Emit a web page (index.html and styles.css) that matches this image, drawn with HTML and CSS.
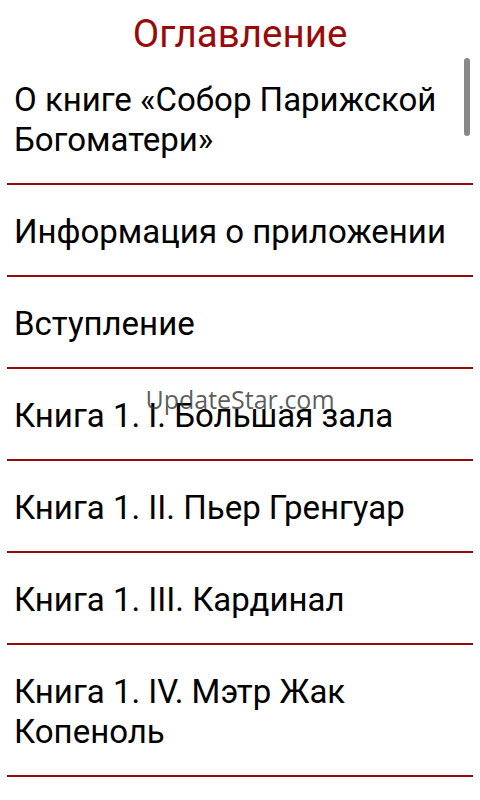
FILE: index.html
```html
<!DOCTYPE html>
<html lang="ru">
<head>
<meta charset="utf-8">
<link rel="stylesheet" href="styles.css">
</head>
<body>
<div class="screen">
  <h1 class="title">Оглавление</h1>
  <ul class="toc">
    <li class="item">О книге «Собор Парижской Богоматери»</li>
    <li class="item">Информация о приложении</li>
    <li class="item">Вступление</li>
    <li class="item">Книга 1. I. Большая зала</li>
    <li class="item">Книга 1. II. Пьер Гренгуар</li>
    <li class="item">Книга 1. III. Кардинал</li>
    <li class="item">Книга 1. IV. Мэтр Жак Копеноль</li>
  </ul>
  <div class="scrollbar"></div>
  <div class="watermark">UpdateStar.com</div>
</div>
</body>
</html>
```
FILE: styles.css
```css
html, body {
  margin: 0;
  padding: 0;
  background: #ffffff;
}
.screen {
  position: relative;
  width: 480px;
  height: 800px;
  overflow: hidden;
  font-family: Roboto, "Noto Sans", sans-serif;
}
.title {
  margin: 0;
  height: 53px;
  line-height: 68px;
  text-align: center;
  font-size: 38.5px;
  font-weight: 400;
  color: #990a0a;
}
.toc {
  list-style: none;
  margin: 0 7px;
  padding: 0;
}
.item {
  padding: 27px 7px 23px 7px;
  line-height: 40px;
  font-size: 33px;
  color: #000;
  border-bottom: 2px solid #8e0e0e;
}
.scrollbar {
  position: absolute;
  left: 464px;
  top: 58px;
  width: 6px;
  height: 78px;
  border-radius: 3px;
  background: #888;
}
.watermark {
  position: absolute;
  left: 0;
  right: 0;
  top: 382px;
  text-align: center;
  font-size: 25px;
  color: rgba(50, 50, 50, 0.8);
  font-family: "Open Sans", "Noto Sans", sans-serif;
}
```
